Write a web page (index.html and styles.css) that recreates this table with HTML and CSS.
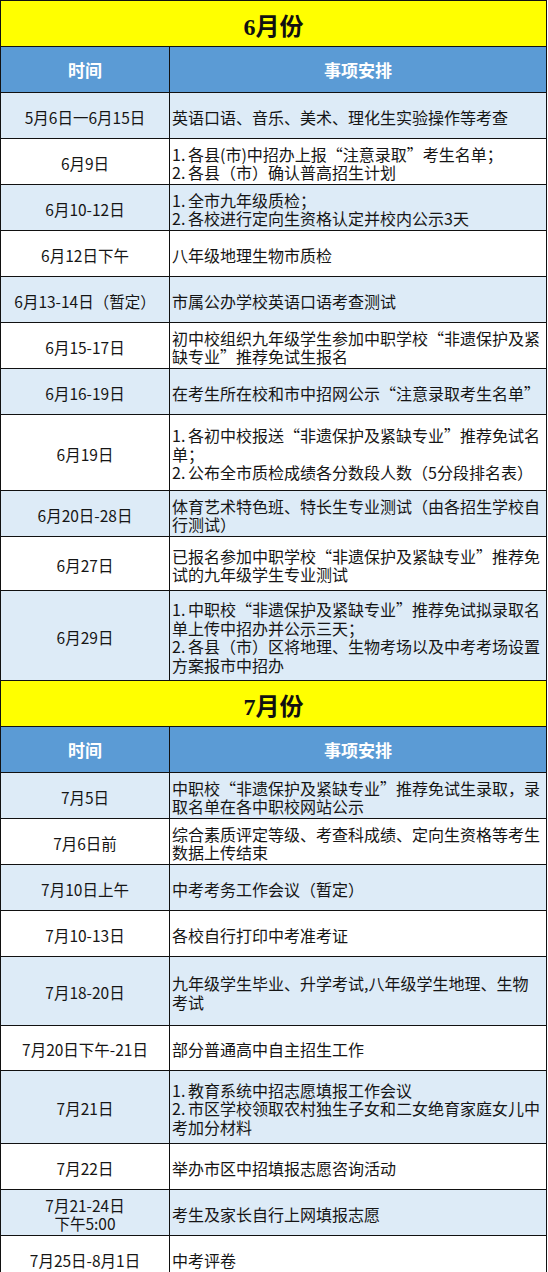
FILE: index.html
```html
<!DOCTYPE html>
<html lang="zh-CN">
<head>
<meta charset="utf-8">
<title>中招工作安排</title>
<link rel="stylesheet" href="styles.css">
</head>
<body>
<div class="sheet">
  <div class="month">6月份</div>
  <div class="row head"><div class="c-time">时间</div><div class="c-item">事项安排</div></div>
  <div class="row alt"><div class="c-time">5月6日一6月15日</div><div class="c-item">英语口语、音乐、美术、理化生实验操作等考查</div></div>
  <div class="row"><div class="c-time">6月9日</div><div class="c-item"><span><span class="n">1.</span>各县(市)中招办上报“注意录取”考生名单；</span><span><span class="n">2.</span>各县（市）确认普高招生计划</span></div></div>
  <div class="row alt"><div class="c-time">6月10-12日</div><div class="c-item"><span><span class="n">1.</span>全市九年级质检；</span><span><span class="n">2.</span>各校进行定向生资格认定并校内公示3天</span></div></div>
  <div class="row"><div class="c-time">6月12日下午</div><div class="c-item">八年级地理生物市质检</div></div>
  <div class="row alt"><div class="c-time">6月13-14日（暂定）</div><div class="c-item">市属公办学校英语口语考查测试</div></div>
  <div class="row"><div class="c-time">6月15-17日</div><div class="c-item"><span>初中校组织九年级学生参加中职学校“非遗保护及紧</span><span>缺专业”推荐免试生报名</span></div></div>
  <div class="row alt"><div class="c-time">6月16-19日</div><div class="c-item">在考生所在校和市中招网公示“注意录取考生名单”</div></div>
  <div class="row h76"><div class="c-time">6月19日</div><div class="c-item"><span><span class="n">1.</span>各初中校报送“非遗保护及紧缺专业”推荐免试名</span><span>单；</span><span><span class="n">2.</span>公布全市质检成绩各分数段人数（5分段排名表）</span></div></div>
  <div class="row alt"><div class="c-time">6月20日-28日</div><div class="c-item"><span>体育艺术特色班、特长生专业测试（由各招生学校自</span><span>行测试）</span></div></div>
  <div class="row h54"><div class="c-time">6月27日</div><div class="c-item"><span>已报名参加中职学校“非遗保护及紧缺专业”推荐免</span><span>试的九年级学生专业测试</span></div></div>
  <div class="row alt h90"><div class="c-time">6月29日</div><div class="c-item"><span><span class="n">1.</span>中职校“非遗保护及紧缺专业”推荐免试拟录取名</span><span>单上传中招办并公示三天；</span><span><span class="n">2.</span>各县（市）区将地理、生物考场以及中考考场设置</span><span>方案报市中招办</span></div></div>

  <div class="month">7月份</div>
  <div class="row head"><div class="c-time">时间</div><div class="c-item">事项安排</div></div>
  <div class="row alt"><div class="c-time">7月5日</div><div class="c-item"><span>中职校“非遗保护及紧缺专业”推荐免试生录取，录</span><span>取名单在各中职校网站公示</span></div></div>
  <div class="row"><div class="c-time">7月6日前</div><div class="c-item"><span>综合素质评定等级、考查科成绩、定向生资格等考生</span><span>数据上传结束</span></div></div>
  <div class="row alt"><div class="c-time">7月10日上午</div><div class="c-item">中考考务工作会议（暂定）</div></div>
  <div class="row"><div class="c-time">7月10-13日</div><div class="c-item">各校自行打印中考准考证</div></div>
  <div class="row alt h69"><div class="c-time">7月18-20日</div><div class="c-item"><span>九年级学生毕业、升学考试,八年级学生地理、生物</span><span>考试</span></div></div>
  <div class="row h45"><div class="c-time">7月20日下午-21日</div><div class="c-item">部分普通高中自主招生工作</div></div>
  <div class="row alt h73"><div class="c-time">7月21日</div><div class="c-item"><span><span class="n">1.</span>教育系统中招志愿填报工作会议</span><span><span class="n">2.</span>市区学校领取农村独生子女和二女绝育家庭女儿中</span><span>考加分材料</span></div></div>
  <div class="row"><div class="c-time">7月22日</div><div class="c-item">举办市区中招填报志愿咨询活动</div></div>
  <div class="row alt"><div class="c-time"><span>7月21-24日</span><span>下午5:00</span></div><div class="c-item">考生及家长自行上网填报志愿</div></div>
  <div class="row"><div class="c-time">7月25日-8月1日</div><div class="c-item">中考评卷</div></div>
</div>
</body>
</html>
```

FILE: styles.css
```css
html, body {
  margin: 0;
  padding: 0;
  background: #ffffff;
}

.sheet {
  width: 547px;
  border-top: 1px solid #111;
  border-left: 1px solid #111;
  box-sizing: border-box;
  font-family: "Noto Sans CJK SC", "Noto Sans", sans-serif;
  color: #151515;
}

.month {
  height: 46px;
  box-sizing: border-box;
  background: #ffff00;
  border-right: 1px solid #111;
  border-bottom: 1px solid #111;
  display: flex;
  align-items: center;
  justify-content: center;
  padding-top: 2px;
  font-family: "Liberation Serif", "Noto Sans CJK SC", serif;
  font-weight: 700;
  font-size: 24px;
  color: #111;
}

.row {
  display: flex;
  height: 46px;
  box-sizing: border-box;
  border-bottom: 1px solid #111;
  background: #ffffff;
}

.row.alt {
  background: #ddebf7;
}

.row.head {
  background: #5b9bd5;
  color: #ffffff;
  font-weight: 700;
  font-size: 17px;
}

.h45 { height: 45px; }
.h54 { height: 54px; }
.h69 { height: 69px; }
.h73 { height: 73px; }
.h76 { height: 76px; }
.h90 { height: 90px; }

.c-time {
  width: 169px;
  flex: none;
  box-sizing: border-box;
  border-right: 1px solid #111;
  display: flex;
  flex-direction: column;
  align-items: center;
  justify-content: center;
  text-align: center;
  padding-top: 3px;
  font-size: 15.5px;
  line-height: 18.5px;
}

.c-item {
  flex: 1;
  min-width: 0;
  box-sizing: border-box;
  border-right: 1px solid #111;
  display: flex;
  flex-direction: column;
  justify-content: center;
  padding: 3px 0 0 2px;
  font-size: 16px;
  line-height: 18.5px;
  white-space: nowrap;
  overflow: hidden;
}

.n {
  display: inline-block;
  width: 1em;
}

.row.head .c-time,
.row.head .c-item {
  font-size: 17px;
  padding-top: 2px;
}

.row.head .c-item {
  align-items: center;
  padding-left: 0;
}
```
